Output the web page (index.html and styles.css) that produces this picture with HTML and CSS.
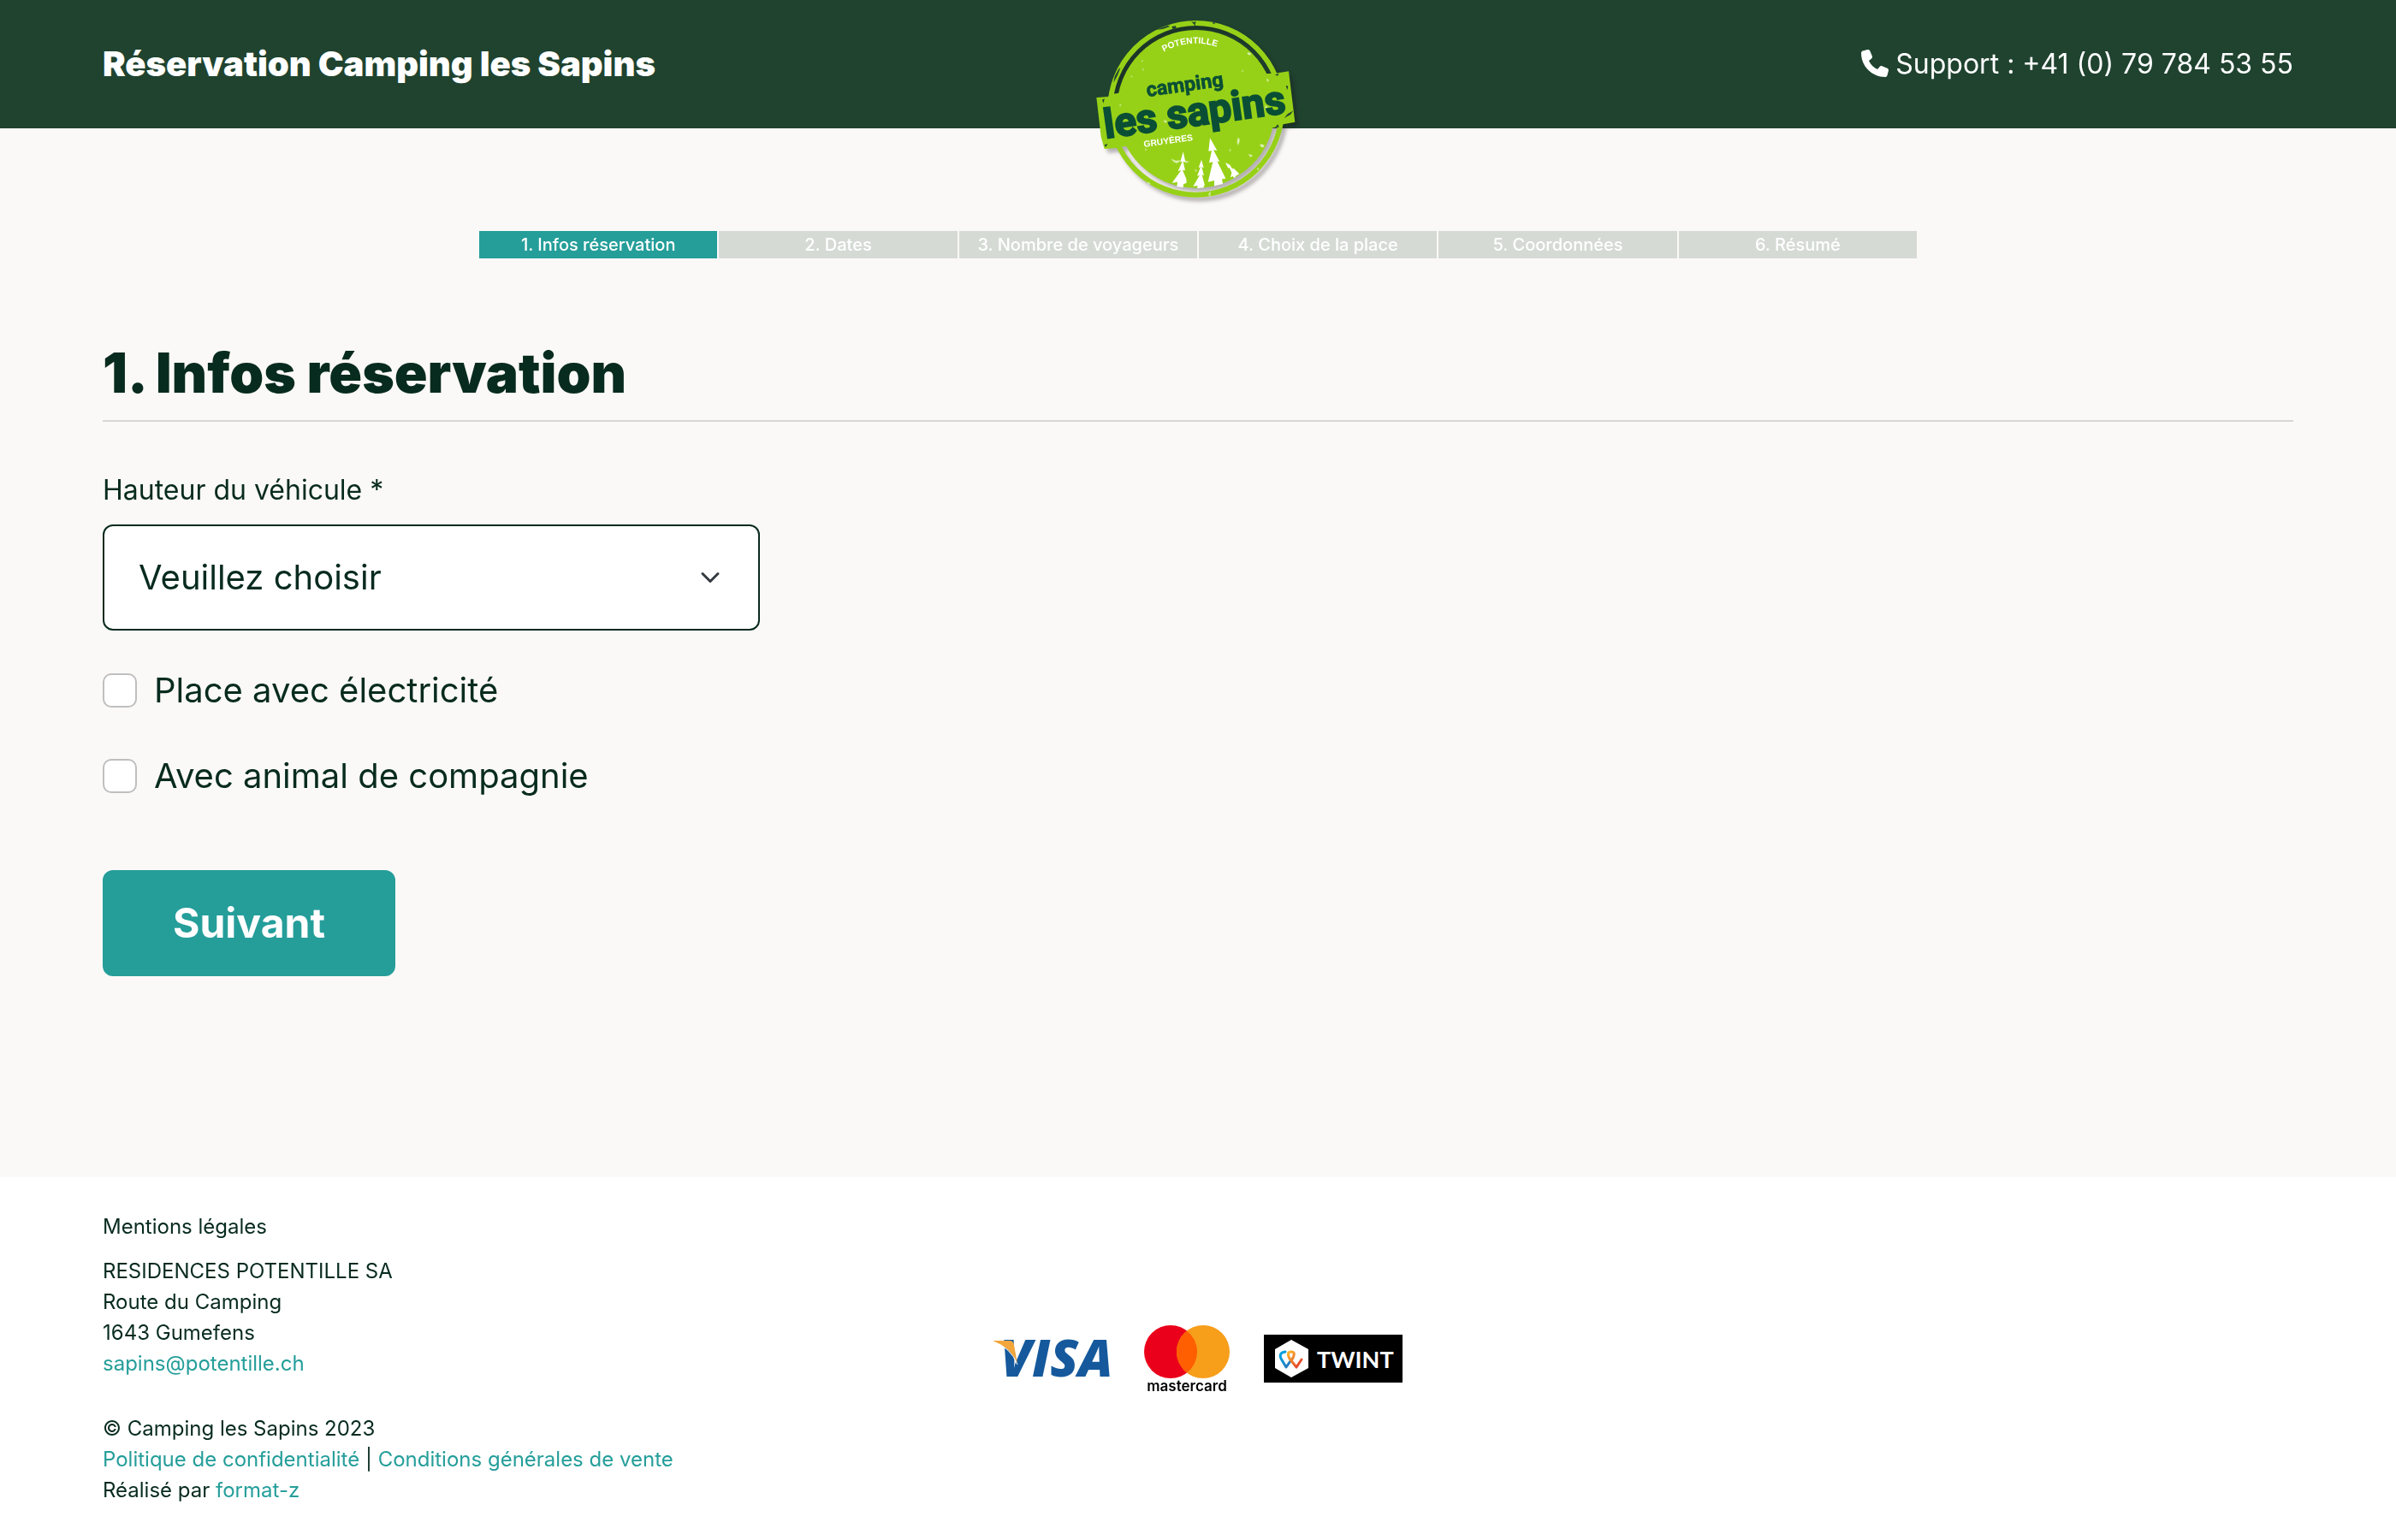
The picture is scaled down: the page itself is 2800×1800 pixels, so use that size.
FILE: index.html
```html
<!DOCTYPE html>
<html lang="fr">
<head>
<meta charset="UTF-8" />
<meta name="viewport" content="width=device-width, initial-scale=1.0" />
<title>Réservation Camping les Sapins</title>
<link rel="stylesheet" href="styles.css">
</head>
<body>

<header class="header">
  <div class="header-title">Réservation Camping les Sapins</div>
  <svg class="logo" viewBox="0 0 840 750" role="img" aria-label="Camping les Sapins">
    <defs>
      <path id="arc" d="M183 382 A230 230 0 0 1 643 382" />
    </defs>
    <g class="logo-badge">
      <circle cx="413" cy="382" r="277" fill="#97d117" />
      <circle cx="413" cy="382" r="301" fill="none" stroke="#97d117" stroke-width="18" />
      <path fill="#97d117" d="M64 342 L105 339 L110 331 L664 258 L690 257 L738 250 L760 428 L718 436 L712 446 L680 448 L160 514 L136 519 L92 522 L80 480 Z" />
    </g>
    <!-- usure du tampon -->
    <g fill="#1f432f">
      <path d="M276 105l18-8 20-7 8 3-24 8zM328 93l14-2 2 8-12 3zM396 74l8 4 10-3-4 8 2 9-7-7zM470 78l12 2-7 5zM128 268l14-26 6-4-10 26-14 26zM734 400l20-12-10 14-22 12zM690 446l10-10 4 10zM690 262l14-4-5 8zM84 350l8-4-3 16zM728 300l8 2-3 14zM92 508l12-4-8 12z" />
    </g>
    <g fill="#fff" opacity="0.8">
      <path d="M594 184l12 3-4 6-8-3zM222 210l5 3-3 5zM226 238l3 4-3 9zM186 265l5 4-5 2zM638 505l14 4-3 8-10-4zM560 482l6 8-5 20-4-12zM596 540l16 5-8 6zM628 588l6 5-6 4zM324 556l18 8 20-2-16 10-10-4zM370 562l20 6-14 2zM660 275l8 6-4 7zM656 370l7 5-6 12zM300 420l12 6-8 5zM316 400l6 5-5 4zM235 520l5 5-5 3zM532 520l3 8-5 3zM410 592l6 6-4 5zM145 365l6 3-4 5zM575 245l4 5-5 2z" />
      <path d="M240 636l14 6-6 6zM455 680l10-10-2 22z" opacity="0.6" />
    </g>
    <text class="logo-small"><textPath href="#arc" startOffset="243">POTENTILLE</textPath></text>
    <text class="logo-camping" transform="translate(242 339) rotate(-8)">camping</text>
    <text class="logo-name" transform="translate(96 485) rotate(-8)">les sapins</text>
    <text class="logo-small" transform="translate(231 516) rotate(-8)">GRUYÈRES</text>
    <g fill="#fff">
      <path d="M368 532 L358 568 L365 566 L350 600 L361 597 L329 641 L348 638 L346 655 L368 657 L369 646 L380 641 L379 628 L366 596 L375 598 L368 566 L376 568 Z" />
      <path d="M432 560 L422 588 L429 586 L417 617 L426 614 L403 653 L418 651 L418 660 L441 658 L440 651 L444 650 L434 613 L441 615 L433 586 L440 588 Z" />
      <path d="M462 484 L457 530 L468 528 L459 571 L472 568 L455 638 L477 633 L477 652 L507 645 L504 628 L517 626 L487 565 L496 568 L474 526 L487 528 Z" />
      <path d="M516 570 L526 590 L530 588 L538 605 L534 622 L542 618 L548 624 L554 616 L565 610 L545 590 L540 592 L532 578 Z" />
    </g>
  </svg>
  <div class="header-support">
    <svg class="phone" viewBox="0 0 512 512" aria-hidden="true">
      <path fill="currentColor" d="M164.900 24.600c-7.700-18.600-28-28.500-47.400-23.200l-88 24C12.100 30.200 0 46 0 64C0 311.400 200.600 512 448 512c18 0 33.800-12.100 38.600-29.500l24-88c5.300-19.400-4.600-39.700-23.200-47.400l-96-40c-16.300-6.800-35.200-2.100-46.300 11.600L304.700 368C234.300 334.700 177.300 277.700 144 207.300L193.300 167c13.700-11.200 18.400-30 11.600-46.300l-40-96z" />
    </svg>
    <span>Support : +41 (0) 79 784 53 55</span>
  </div>
</header>

<main class="main">
  <ol class="steps">
    <li class="step active">1. Infos réservation</li>
    <li class="step">2. Dates</li>
    <li class="step">3. Nombre de voyageurs</li>
    <li class="step">4. Choix de la place</li>
    <li class="step">5. Coordonnées</li>
    <li class="step">6. Résumé</li>
  </ol>

  <h1>1. Infos réservation</h1>

  <form class="form">
    <label class="field-label" for="hauteur">Hauteur du véhicule *</label>
    <div class="select-wrap">
      <select class="select" id="hauteur" required>
        <option value="">Veuillez choisir</option>
      </select>
      <svg class="chevron" viewBox="0 0 16 16" aria-hidden="true">
        <path d="M2 5l6 6 6-6" fill="none" stroke="#343a40" stroke-width="2" stroke-linecap="round" stroke-linejoin="round" />
      </svg>
    </div>

    <div class="check">
      <input type="checkbox" id="electricite" />
      <label for="electricite">Place avec électricité</label>
    </div>
    <div class="check">
      <input type="checkbox" id="animal" />
      <label for="animal">Avec animal de compagnie</label>
    </div>

    <button class="btn" type="submit">Suivant</button>
  </form>
</main>

<footer class="footer">
  <div class="legal">
    <p>Mentions légales</p>
    <p class="address">RESIDENCES POTENTILLE SA<br>
      Route du Camping<br>
      1643 Gumefens<br>
      <a href="mailto:sapins@potentille.ch">sapins@potentille.ch</a></p>
    <p>© Camping les Sapins 2023<br>
      <a href="#">Politique de confidentialité</a> | <a href="#">Conditions générales de vente</a><br>
      Réalisé par <a href="#">format-z</a></p>
  </div>

  <div class="payments">
    <svg class="visa" viewBox="0 0 136 42" role="img" aria-label="Visa">
      <text class="visa-text" x="8" y="42">VISA</text>
      <path fill="#f2a63c" d="M0 0 H19 Q23 0 24 5 L28 27 Q20 8 0 1 Z" />
      <path fill="none" stroke="#fff" d="M0 1 Q20 8 28 28" />
    </svg>
    <svg class="mastercard" viewBox="0 0 100 80" role="img" aria-label="Mastercard">
      <circle cx="31" cy="32" r="31" fill="#eb001b" />
      <circle cx="69" cy="32" r="31" fill="#f79e1b" />
      <path fill="#ff5f00" d="M50 7.500 A31 31 0 0 1 50 56.500 A31 31 0 0 1 50 7.500 Z" />
      <text class="mastercard-text" x="50" y="78" text-anchor="middle">mastercard</text>
    </svg>
    <svg class="twint" viewBox="0 0 162 56" role="img" aria-label="Twint">
      <defs>
        <linearGradient id="g1" x1="0" y1="0" x2="1" y2="1">
          <stop offset="0" stop-color="#00a6e2" />
          <stop offset="1" stop-color="#2f6fb3" />
        </linearGradient>
        <linearGradient id="g2" x1="0" y1="0" x2="1" y2="1">
          <stop offset="0" stop-color="#fbb72c" />
          <stop offset="1" stop-color="#e1322d" />
        </linearGradient>
      </defs>
      <rect width="162" height="56" fill="#000" />
      <path fill="#fff" d="M32 6 L52 17 V39 L32 50 L13 39 V17 Z" />
      <g fill="none" stroke-width="3" stroke-linecap="round" stroke-linejoin="round">
        <path stroke="url(#g1)" d="M25 20 Q17 21 20 28 L26 38 L33 28" />
        <path stroke="url(#g2)" d="M33 29 Q38 20 32 20 Q26 20 30 28 L38 38 L44 29" />
      </g>
      <text class="twint-text" x="62" y="39">TWINT</text>
    </svg>
  </div>
</footer>

</body>
</html>
```

FILE: styles.css
```css
* {
  box-sizing: border-box;
}
body {
  margin: 0;
  min-height: 100vh;
  display: flex;
  flex-direction: column;
  font-family: Inter, "Liberation Sans", sans-serif;
  color: #082b1f;
  background: #fbf9f7;
}
a {
  color: #259e9a;
  text-decoration: none;
}

/* Header */
.header {
  display: grid;
  grid-template-columns: 1fr auto 1fr;
  grid-template-rows: 148px;
  align-items: center;
  height: 150px;
  padding: 0 120px;
  background: #1f432f;
  color: #fff;
}
.header-title {
  font-size: 40px;
  font-weight: 900;
}
.header-support {
  display: flex;
  align-items: center;
  justify-content: flex-end;
  gap: 8px;
  font-size: 32px;
}
.phone {
  width: 32px;
  height: 32px;
}
.logo {
  width: 280px;
  height: 250px;
  align-self: start;
}
.logo-badge {
  filter: drop-shadow(12px 14px 6px rgba(20, 10, 20, 0.3));
}
.logo-small {
  font-family: "Liberation Sans", sans-serif;
  font-size: 31px;
  font-weight: 700;
  fill: #fff;
}
.logo-camping,
.logo-name {
  font-family: Roboto, "Liberation Sans", sans-serif;
  font-weight: 700;
  fill: #0a4f35;
  stroke: #0a4f35;
}
.logo-camping {
  font-size: 70px;
  stroke-width: 2px;
}
.logo-name {
  font-size: 142px;
  stroke-width: 6px;
}

/* Contenu */
.main {
  flex: 1;
  padding: 120px 120px 80px;
}
.steps {
  display: grid;
  grid-template-columns: repeat(6, 1fr);
  gap: 2px;
  width: 1680px;
  max-width: 100%;
  margin: 0 auto 96px;
  padding: 0;
  list-style: none;
}
.step {
  height: 32px;
  background: #d5dad5;
  color: #fff;
  font-size: 20px;
  font-weight: 500;
  line-height: 32px;
  text-align: center;
}
.step.active {
  background: #259e9a;
}
h1 {
  margin: 0 0 56px;
  padding-bottom: 17px;
  border-bottom: 2px solid #d7d7d4;
  font-size: 64px;
  font-weight: 900;
  line-height: 76px;
}
.form {
  display: flex;
  flex-direction: column;
  align-items: flex-start;
}
.field-label {
  margin-bottom: 16px;
  font-size: 32px;
  line-height: 48px;
}
.select-wrap {
  display: grid;
  align-items: center;
  width: 30%;
}
.select,
.chevron {
  grid-area: 1 / 1;
}
.select {
  appearance: none;
  width: 100%;
  height: 124px;
  padding: 0 40px 2px;
  border: 2px solid #082b1f;
  border-radius: 12px;
  background: #fff;
  color: #082b1f;
  font-family: inherit;
  font-size: 40px;
}
.chevron {
  justify-self: end;
  width: 24px;
  height: 24px;
  margin-right: 46px;
  pointer-events: none;
}
.check {
  display: flex;
  align-items: center;
  gap: 20px;
  margin-top: 40px;
  font-size: 40px;
  line-height: 60px;
}
.check input {
  appearance: none;
  width: 40px;
  height: 40px;
  margin: 0;
  border: 2px solid #bfbfbf;
  border-radius: 10px;
  background: #fff;
}
.check input:checked {
  background: #259e9a;
}
.btn {
  height: 124px;
  margin-top: 80px;
  padding: 0 80px 2px;
  border: 2px solid #259e9a;
  border-radius: 12px;
  background: #259e9a;
  color: #fff;
  font-family: inherit;
  font-size: 48px;
  font-weight: 700;
}

/* Footer */
.footer {
  display: grid;
  grid-template-columns: 1fr auto 1fr;
  align-items: center;
  padding: 40px 120px;
  background: #fff;
  font-size: 24px;
  line-height: 36px;
}
.footer p {
  margin: 0;
}
.footer .address {
  margin: 16px 0 40px;
}
.payments {
  display: flex;
  align-items: center;
  gap: 40px;
}
.visa {
  width: 136px;
  height: 42px;
  overflow: visible;
}
.visa-text {
  font-family: "Open Sans", sans-serif;
  font-size: 60px;
  font-weight: 800;
  font-style: italic;
  fill: #15599c;
}
.mastercard {
  width: 100px;
  height: 80px;
  overflow: visible;
}
.mastercard-text {
  font-family: Inter, sans-serif;
  font-size: 17px;
  font-weight: 600;
}
.twint {
  width: 162px;
  height: 56px;
}
.twint-text {
  font-family: Lato, sans-serif;
  font-size: 27px;
  font-weight: 700;
  fill: #fff;
}
```
